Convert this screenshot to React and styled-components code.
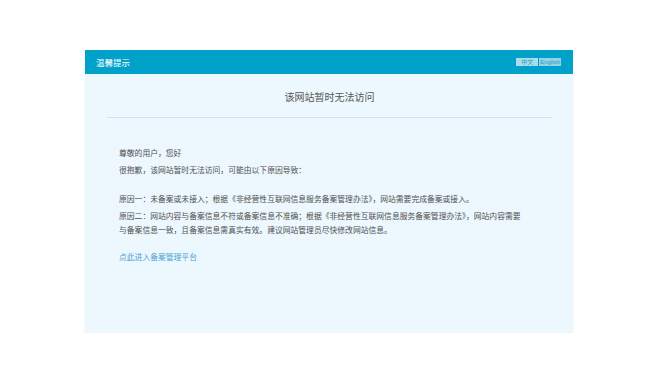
import React from "react";
import styled, { createGlobalStyle } from "styled-components";

const Global = createGlobalStyle`
  html, body { margin: 0; padding: 0; background: #ffffff; }
  body { font-family: "Noto Sans CJK SC", "Liberation Sans", sans-serif; }
`;

const Card = styled.div`
  margin: 50px 0 0 85px;
  width: 488px;
  height: 283px;
  background: #ecf8fd;
  box-shadow: 0 1px 3px rgba(0, 0, 0, 0.05);
  display: flex;
  flex-direction: column;
`;

const Header = styled.div`
  height: 24px;
  background: #00a2c9;
  display: flex;
  align-items: center;
  justify-content: space-between;
  padding: 0 12px 0 11px;
`;

const HeaderTitle = styled.div`
  color: #ffffff;
  font-size: 8.5px;
  line-height: 12px;
`;

const Langs = styled.div`
  display: flex;
  gap: 1px;
`;

const Lang = styled.span`
  background: ${(p) => (p.$active ? "#a8dded" : "#92d3e6")};
  color: #2d9cc6;
  font-size: 6px;
  line-height: 8px;
  height: 8px;
  padding: 0 ${(p) => (p.$active ? "5px" : "1px")};
  font-family: "Liberation Sans", "Noto Sans CJK SC", sans-serif;
`;

const Body = styled.div`
  flex: 1;
  padding: 0 21px 0 22px;
`;

const Title = styled.div`
  margin-top: 16px;
  padding-bottom: 13px;
  border-bottom: 1px solid #cae5ef;
  text-align: center;
  font-size: 10px;
  line-height: 14px;
  color: #555555;
`;

const Content = styled.div`
  padding: 28px 12px 0 12px;
`;

const Para = styled.p`
  margin: ${(p) => p.$top || 0}px 0 3px 0;
  font-size: 7.8px;
  line-height: 14px;
  color: #4f4f4f;
  white-space: nowrap;
`;

const Link = styled.a`
  display: block;
  margin-top: 13px;
  font-size: 7.8px;
  line-height: 14px;
  color: #4aa3d6;
  text-decoration: none;
`;

export default function App() {
  return (
    <>
      <Global />
      <Card>
        <Header>
          <HeaderTitle>温馨提示</HeaderTitle>
          <Langs>
            <Lang $active>中文</Lang>
            <Lang>English</Lang>
          </Langs>
        </Header>
        <Body>
          <Title>该网站暂时无法访问</Title>
          <Content>
            <Para>尊敬的用户，您好</Para>
            <Para>很抱歉，该网站暂时无法访问，可能由以下原因导致：</Para>
            <Para $top={15}>
              原因一：未备案或未接入；根据《非经营性互联网信息服务备案管理办法》，网站需要完成备案或接入。
            </Para>
            <Para>
              原因二：网站内容与备案信息不符或备案信息不准确；根据《非经营性互联网信息服务备案管理办法》，网站内容需要
              <br />
              与备案信息一致，且备案信息需真实有效。建议网站管理员尽快修改网站信息。
            </Para>
            <Link href="#">点此进入备案管理平台</Link>
          </Content>
        </Body>
      </Card>
    </>
  );
}
